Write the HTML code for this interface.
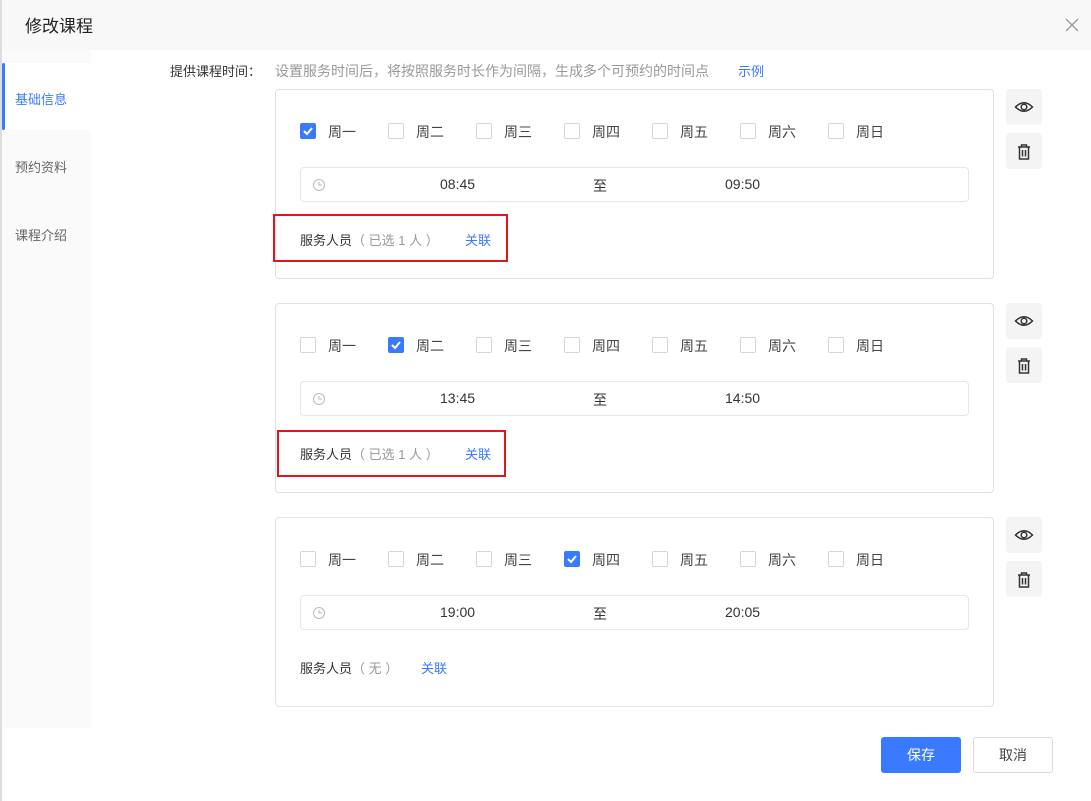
<!DOCTYPE html>
<html><head><meta charset="utf-8"><style>
*{margin:0;padding:0;box-sizing:border-box}
body{width:1091px;height:801px;background:#fff;font-family:"Liberation Sans","Noto Sans CJK SC",sans-serif;font-size:13px;color:#333;position:relative;overflow:hidden}
.a{position:absolute}
.hdr{left:0;top:0;width:1091px;height:50px;background:#f8f8f8}
.title{left:25px;top:12px;font-size:17px;color:#222}
.side{left:2px;top:50px;width:89px;height:678px;background:#fafafa}
.lb{left:0;top:0;width:2px;height:801px;background:#ddd}
.act{left:2px;top:63px;width:89px;height:67px;background:#fff}
.bar{left:2px;top:63px;width:3px;height:67px;background:#3a7afe;border-radius:2px}
.nav{left:15px;font-size:13px;color:#666}
.card{left:275px;width:719px;height:190px;border:1px solid #e0e0e6;border-radius:4px;background:#fff}
.cb{width:16px;height:16px;border:1px solid #d6d6d6;border-radius:2px;background:#fff}
.cb.on{background:#3a7afe;border-color:#3a7afe}
.day{font-size:14px;color:#444}
.inp{left:300px;width:669px;height:35px;border:1px solid #e6e6e6;border-radius:4px}
.t{font-size:14px;color:#333}
.btn{left:1006px;width:36px;height:36px;background:#f4f4f4;border-radius:4px}
.red{border:2px solid #e0161f}
</style></head><body>
<div class="a hdr"></div>
<div class="a title">修改课程</div>
<svg class="a" style="left:1065px;top:18px" width="14" height="14"><path d="M1 1 L13 13 M13 1 L1 13" stroke="#999" stroke-width="1.3"/></svg>
<div class="a side"></div>
<div class="a lb"></div>
<div class="a act"></div>
<div class="a bar"></div>
<div class="a nav" style="top:89px;color:#3a7afe">基础信息</div>
<div class="a nav" style="top:157px">预约资料</div>
<div class="a nav" style="top:225px">课程介绍</div>
<div class="a" style="left:170px;top:61px;color:#333">提供课程时间：</div>
<div class="a" style="left:275px;top:61px;color:#999;font-size:14px">设置服务时间后，将按照服务时长作为间隔，生成多个可预约的时间点</div>
<div class="a" style="left:738px;top:61px;color:#3a7afe">示例</div>

<div class="a card" style="top:89px"></div>
<div class="a card" style="top:303px"></div>
<div class="a card" style="top:517px"></div>

<div class="a red" style="left:273px;top:214px;width:235px;height:48px"></div>
<div class="a red" style="left:277px;top:430px;width:229px;height:47px"></div>

<svg class="a" style="left:0;top:0" width="1091" height="801">
<defs>
<g id="eye"><path d="M-8.5 0 Q0 -8.5 8.5 0 Q0 8.5 -8.5 0Z" fill="none" stroke="#333" stroke-width="1.5"/><circle r="2.8" fill="none" stroke="#333" stroke-width="1.5"/></g>
<g id="bin" fill="none" stroke="#333" stroke-width="1.5"><path d="M-6 -5 H6 M-2.5 -5 V-7 H2.5 V-5 M-4.5 -5 V7 H4.5 V-5 M-1.5 -2 V4.5 M1.5 -2 V4.5"/></g>
<g id="clk" fill="none" stroke="#bbb" stroke-width="1"><circle r="5.5"/><path d="M0 -3 V0 H3"/></g>
</defs>
</svg>

<!-- card 1 -->
<div class="a cb on" style="left:300px;top:123px"><svg width="14" height="14"><path d="M3 7 L6 10 L11 4" stroke="#fff" stroke-width="2" fill="none"/></svg></div>
<div class="a cb" style="left:388px;top:123px"></div><div class="a cb" style="left:476px;top:123px"></div><div class="a cb" style="left:564px;top:123px"></div><div class="a cb" style="left:652px;top:123px"></div><div class="a cb" style="left:740px;top:123px"></div><div class="a cb" style="left:828px;top:123px"></div>
<div class="a day" style="left:328px;top:122px">周一</div><div class="a day" style="left:416px;top:122px">周二</div><div class="a day" style="left:504px;top:122px">周三</div><div class="a day" style="left:592px;top:122px">周四</div><div class="a day" style="left:680px;top:122px">周五</div><div class="a day" style="left:768px;top:122px">周六</div><div class="a day" style="left:856px;top:122px">周日</div>
<div class="a inp" style="top:167px"></div>
<svg class="a" style="left:312px;top:178px" width="14" height="14"><use href="#clk" x="7" y="7"/></svg>
<div class="a t" style="left:440px;top:176px">08:45</div><div class="a t" style="left:593px;top:176px">至</div><div class="a t" style="left:725px;top:176px">09:50</div>
<div class="a" style="left:300px;top:230px"><span>服务人员</span><span style="color:#999">（ 已选 1 人 ）</span></div>
<div class="a" style="left:465px;top:230px;color:#3a7afe">关联</div>

<!-- card 2 -->
<div class="a cb" style="left:300px;top:337px"></div>
<div class="a cb on" style="left:388px;top:337px"><svg width="14" height="14"><path d="M3 7 L6 10 L11 4" stroke="#fff" stroke-width="2" fill="none"/></svg></div><div class="a cb" style="left:476px;top:337px"></div><div class="a cb" style="left:564px;top:337px"></div><div class="a cb" style="left:652px;top:337px"></div><div class="a cb" style="left:740px;top:337px"></div><div class="a cb" style="left:828px;top:337px"></div>
<div class="a day" style="left:328px;top:336px">周一</div><div class="a day" style="left:416px;top:336px">周二</div><div class="a day" style="left:504px;top:336px">周三</div><div class="a day" style="left:592px;top:336px">周四</div><div class="a day" style="left:680px;top:336px">周五</div><div class="a day" style="left:768px;top:336px">周六</div><div class="a day" style="left:856px;top:336px">周日</div>
<div class="a inp" style="top:381px"></div>
<svg class="a" style="left:312px;top:392px" width="14" height="14"><use href="#clk" x="7" y="7"/></svg>
<div class="a t" style="left:440px;top:390px">13:45</div><div class="a t" style="left:593px;top:390px">至</div><div class="a t" style="left:725px;top:390px">14:50</div>
<div class="a" style="left:300px;top:444px"><span>服务人员</span><span style="color:#999">（ 已选 1 人 ）</span></div>
<div class="a" style="left:465px;top:444px;color:#3a7afe">关联</div>

<!-- card 3 -->
<div class="a cb" style="left:300px;top:551px"></div>
<div class="a cb" style="left:388px;top:551px"></div><div class="a cb" style="left:476px;top:551px"></div><div class="a cb on" style="left:564px;top:551px"><svg width="14" height="14"><path d="M3 7 L6 10 L11 4" stroke="#fff" stroke-width="2" fill="none"/></svg></div><div class="a cb" style="left:652px;top:551px"></div><div class="a cb" style="left:740px;top:551px"></div><div class="a cb" style="left:828px;top:551px"></div>
<div class="a day" style="left:328px;top:550px">周一</div><div class="a day" style="left:416px;top:550px">周二</div><div class="a day" style="left:504px;top:550px">周三</div><div class="a day" style="left:592px;top:550px">周四</div><div class="a day" style="left:680px;top:550px">周五</div><div class="a day" style="left:768px;top:550px">周六</div><div class="a day" style="left:856px;top:550px">周日</div>
<div class="a inp" style="top:595px"></div>
<svg class="a" style="left:312px;top:606px" width="14" height="14"><use href="#clk" x="7" y="7"/></svg>
<div class="a t" style="left:440px;top:604px">19:00</div><div class="a t" style="left:593px;top:604px">至</div><div class="a t" style="left:725px;top:604px">20:05</div>
<div class="a" style="left:300px;top:658px"><span>服务人员</span><span style="color:#999">（ 无 ）</span></div>
<div class="a" style="left:421px;top:658px;color:#3a7afe">关联</div>

<div class="a btn" style="top:89px"><svg width="36" height="36"><use href="#eye" x="18" y="18"/></svg></div>
<div class="a btn" style="top:133px"><svg width="36" height="36"><use href="#bin" x="18" y="19"/></svg></div>
<div class="a btn" style="top:303px"><svg width="36" height="36"><use href="#eye" x="18" y="18"/></svg></div>
<div class="a btn" style="top:347px"><svg width="36" height="36"><use href="#bin" x="18" y="19"/></svg></div>
<div class="a btn" style="top:517px"><svg width="36" height="36"><use href="#eye" x="18" y="18"/></svg></div>
<div class="a btn" style="top:561px"><svg width="36" height="36"><use href="#bin" x="18" y="19"/></svg></div>

<div class="a" style="left:881px;top:737px;width:80px;height:36px;background:#3a7afe;border-radius:3px;color:#fff;font-size:14px;line-height:36px;text-align:center">保存</div>
<div class="a" style="left:973px;top:737px;width:80px;height:36px;border:1px solid #dcdcdc;border-radius:3px;color:#444;font-size:14px;line-height:34px;text-align:center">取消</div>
</body></html>
